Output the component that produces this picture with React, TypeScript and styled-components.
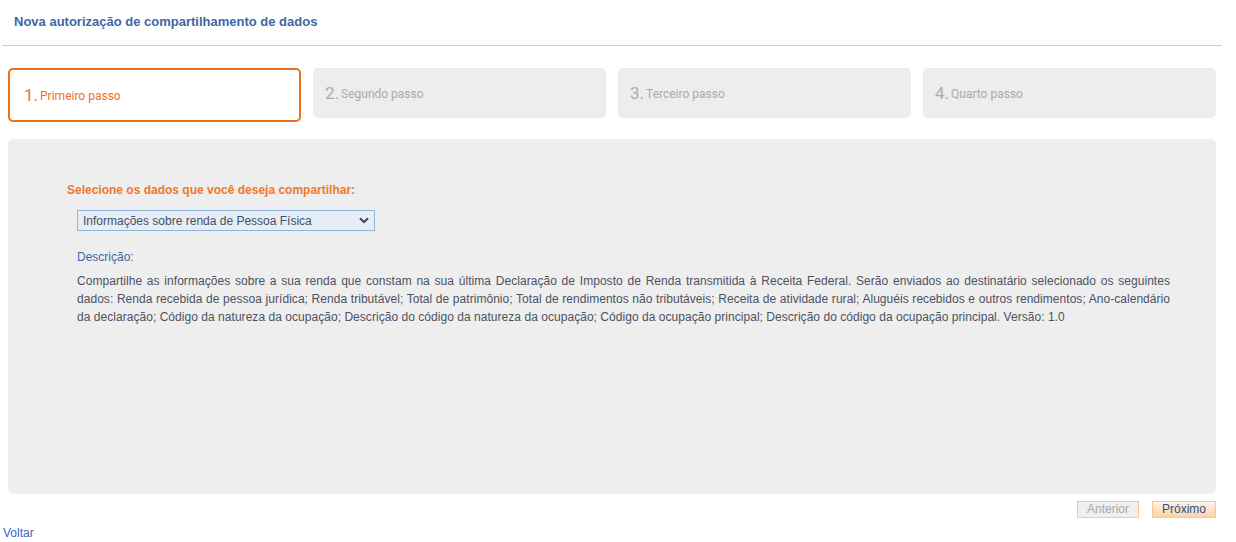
import React, { useState } from "react"
import styled, { createGlobalStyle } from "styled-components"

const GlobalStyle = createGlobalStyle`
	html, body {
		margin: 0;
		padding: 0;
		background: #ffffff;
		font-family: "Liberation Sans", Arial, sans-serif;
	}
`

const Page = styled.div`
	width: 1236px;
	display: flex;
	flex-direction: column;
`

const Header = styled.div`
	margin: 0 14px 0 2px;
	height: 46px;
	box-sizing: border-box;
	padding: 14px 0 0 12px;
	border-bottom: 1px solid #f9c795;
`

const Title = styled.h1`
	margin: 0;
	font-size: 13px;
	font-weight: bold;
	color: #3f66a5;
`

const Steps = styled.div`
	display: grid;
	grid-template-columns: repeat(4, 293px);
	column-gap: 12px;
	align-items: start;
	margin: 22px 0 0 8px;
`

const Step = styled.div<{ $active: boolean }>`
	box-sizing: border-box;
	height: ${(p) => (p.$active ? "54px" : "50px")};
	border-radius: 5px;
	display: flex;
	align-items: center;
	padding-left: ${(p) => (p.$active ? "14px" : "12px")};
	background: ${(p) => (p.$active ? "#ffffff" : "#ededed")};
	border: ${(p) => (p.$active ? "2px solid #ef6f1f" : "none")};
	color: ${(p) => (p.$active ? "#ef6f1f" : "#aaaaaa")};
	font-family: Roboto, "Liberation Sans", sans-serif;
`

const StepNumber = styled.span`
	font-size: 17px;
	margin-right: 2px;
`

const StepLabel = styled.span`
	font-size: 12px;
	position: relative;
	top: 1px;
`

const Panel = styled.div`
	margin: 17px 20px 0 8px;
	height: 355px;
	box-sizing: border-box;
	background: #eeeeee;
	border-radius: 6px;
	padding: 44px 46px 0 59px;
`

const FieldLabel = styled.div`
	font-size: 12px;
	font-weight: bold;
	color: #f0782a;
`

const Field = styled.div`
	padding-left: 10px;
`

const SelectWrap = styled.div`
	position: relative;
	width: 298px;
	margin-top: 13px;
`

const Select = styled.select`
	appearance: none;
	width: 100%;
	height: 21px;
	box-sizing: border-box;
	border: 1px solid #8fb5d9;
	background: #e5edf6;
	color: #465062;
	font-family: "Liberation Sans", Arial, sans-serif;
	font-size: 12px;
	padding: 0 0 0 5px;
	border-radius: 0;
	outline: none;
`

const Chevron = styled.svg`
	position: absolute;
	right: 6px;
	top: 7px;
	pointer-events: none;
`

const DescTitle = styled.div`
	margin-top: 19px;
	font-size: 12px;
	color: #3f66a5;
`

const DescText = styled.p`
	margin: 8px 0 0;
	font-size: 12px;
	line-height: 18px;
	letter-spacing: 0.04px;
	color: #4d5262;
	text-align: justify;
	hyphens: none;
`

const Actions = styled.div`
	display: flex;
	justify-content: flex-end;
	gap: 13px;
	margin: 7px 20px 0 0;
`

const NavButton = styled.button<{ $primary?: boolean }>`
	height: 17px;
	box-sizing: border-box;
	padding: 0 9px;
	font-family: "Liberation Sans", Arial, sans-serif;
	font-size: 12px;
	line-height: 15px;
	border: 1px solid #fdc890;
	border-radius: 0;
	color: ${(p) => (p.$primary ? "#2c4f91" : "#a9a9a9")};
	background: ${(p) => (p.$primary ? "linear-gradient(#fff3e6, #fdd3a6)" : "#efefef")};
	cursor: ${(p) => (p.$primary ? "pointer" : "default")};
`

const BackLink = styled.a`
	display: inline-block;
	margin: 8px 0 0 3px;
	font-size: 12px;
	color: #3767c8;
	text-decoration: none;
`

const steps = ["Primeiro passo", "Segundo passo", "Terceiro passo", "Quarto passo"]

export default function App() {
	const [data, setData] = useState("renda")

	return (
		<>
			<GlobalStyle />
			<Page>
				<Header>
					<Title>Nova autorização de compartilhamento de dados</Title>
				</Header>

				<Steps>
					{steps.map((label, i) => (
						<Step key={label} $active={i === 0}>
							<StepNumber>{i + 1}.</StepNumber>
							<StepLabel>{label}</StepLabel>
						</Step>
					))}
				</Steps>

				<Panel>
					<FieldLabel>Selecione os dados que você deseja compartilhar:</FieldLabel>
					<Field>
						<SelectWrap>
							<Select value={data} onChange={(e) => setData(e.target.value)}>
								<option value="renda">Informações sobre renda de Pessoa Física</option>
							</Select>
							<Chevron width="10" height="7" viewBox="0 0 10 7">
								<path d="M1 1.2 L5 5.2 L9 1.2" fill="none" stroke="#3d4654" strokeWidth="2" />
							</Chevron>
						</SelectWrap>
						<DescTitle>Descrição:</DescTitle>
						<DescText>
							Compartilhe as informações sobre a sua renda que constam na sua última Declaração de Imposto de
							Renda transmitida à Receita Federal. Serão enviados ao destinatário selecionado os seguintes dados:
							Renda recebida de pessoa jurídica; Renda tributável; Total de patrimônio; Total de rendimentos não
							tributáveis; Receita de atividade rural; Aluguéis recebidos e outros rendimentos; Ano‑calendário da
							declaração; Código da natureza da ocupação; Descrição do código da natureza da ocupação; Código da
							ocupação principal; Descrição do código da ocupação principal. Versão: 1.0
						</DescText>
					</Field>
				</Panel>

				<Actions>
					<NavButton disabled>Anterior</NavButton>
					<NavButton $primary>Próximo</NavButton>
				</Actions>

				<div>
					<BackLink href="#">Voltar</BackLink>
				</div>
			</Page>
		</>
	)
}
